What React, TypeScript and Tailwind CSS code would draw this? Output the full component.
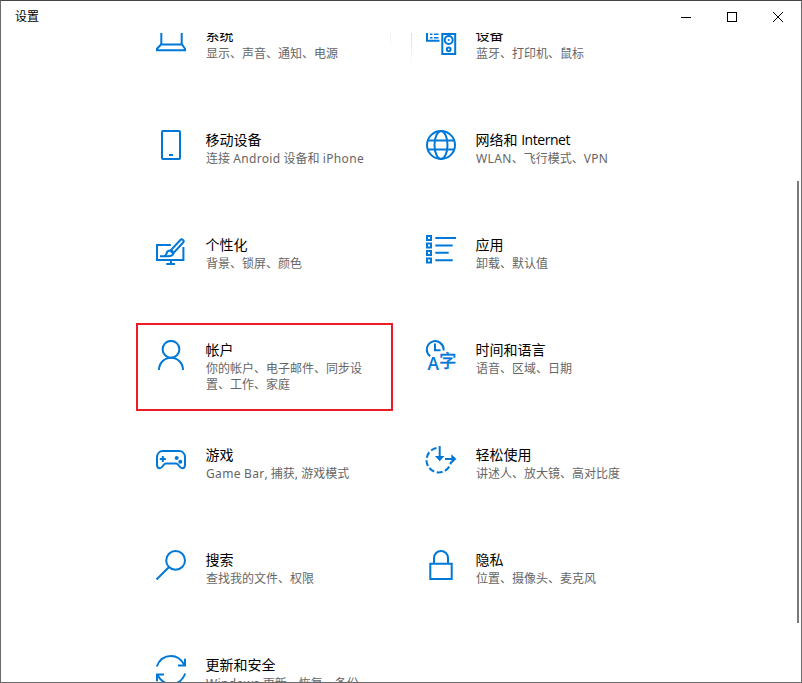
import type { ReactNode } from "react";

type SettingsCategory = {
  id: string;
  title: string;
  description: string;
  icon: ReactNode;
  highlighted?: boolean;
};

const CATEGORIES: SettingsCategory[] = [
  {
    id: "system",
    title: "系统",
    description: "显示、声音、通知、电源",
    icon: (
      <>
        <path d="M6.3 19V3h20.4v16" />
        <path d="M6 19.5h21l3 4.2v1.5H2v-1.5z" />
      </>
    ),
  },
  {
    id: "devices",
    title: "设备",
    description: "蓝牙、打印机、鼠标",
    icon: (
      <>
        <path d="M14.5 15.7H2V4h12.5" />
        <path d="M5 9.3h2.5M9 9.3h4.5M5 12.7h2.5M9 12.7h4.5" strokeWidth="1.6" />
        <path d="M17.3 9h12.9v20H17.3z" />
        <circle cx="23.7" cy="15" r="4" />
        <circle cx="23.7" cy="15" r="1" fill="currentColor" stroke="none" />
        <circle cx="23.7" cy="24.3" r="1.9" />
      </>
    ),
  },
  {
    id: "phone",
    title: "移动设备",
    description: "连接 Android 设备和 iPhone",
    icon: (
      <>
        <rect x="7" y="1" width="18" height="28" rx="1" />
        <path d="M14 25h4" />
      </>
    ),
  },
  {
    id: "network",
    title: "网络和 Internet",
    description: "WLAN、飞行模式、VPN",
    icon: (
      <>
        <circle cx="16" cy="15" r="14" />
        <ellipse cx="16" cy="15" rx="6.5" ry="14" />
        <path d="M3 10.5h26M3 19.5h26" />
      </>
    ),
  },
  {
    id: "personalization",
    title: "个性化",
    description: "背景、锁屏、颜色",
    icon: (
      <>
        <path d="M15.8 10H2v15h26.4V12" />
        <path d="M16 25v4M11.3 29H20" />
        <path d="M15.4 15.6 25.4 5a1.8 1.8 0 0 1 2.7 2.5L18.2 18.4" />
        <path d="M5 21.3h7.5c3.4 0 5.7-1.2 5.7-3.2 0-1.5-1.2-2.5-2.8-2.5-2.6 0-3.6 1.3-4 3.2-.2 1.2-1 2-2.6 2.4M14.5 15l4.5 4" />
      </>
    ),
  },
  {
    id: "apps",
    title: "应用",
    description: "卸载、默认值",
    icon: (
      <>
        <path d="M2 1h4v4H2zM2 8.5h4v4H2zM2 16h4v4H2zM2 23.5h4v4H2z" />
        <path d="M10.3 3H31M10.3 10.4h17.4M10.3 17.7h13.4M10.3 25.2h17.4" />
      </>
    ),
  },
  {
    id: "accounts",
    title: "帐户",
    description: "你的帐户、电子邮件、同步设置、工作、家庭",
    highlighted: true,
    icon: (
      <>
        <circle cx="16" cy="9.3" r="8.4" />
        <path d="M4 30a12 12.3 0 0 1 24 0" />
      </>
    ),
  },
  {
    id: "time",
    title: "时间和语言",
    description: "语音、区域、日期",
    icon: (
      <>
        <path d="M5.2 16.3A8.4 8.4 0 1 1 18.6 10.5" />
        <path d="M10 3.5v6.7h5.5" />
        <text
          x="2.5"
          y="30"
          fontSize="17.5"
          fontWeight="600"
          fill="currentColor"
          stroke="none"
          textLength="11.5"
          lengthAdjust="spacingAndGlyphs"
          className="font-['Open_Sans',sans-serif]"
        >
          A
        </text>
        <text
          x="14.3"
          y="26.5"
          fontSize="17"
          fill="currentColor"
          stroke="currentColor"
          strokeWidth="0.5"
          className="font-['Noto_Sans_CJK_SC',sans-serif]"
        >
          字
        </text>
      </>
    ),
  },
  {
    id: "gaming",
    title: "游戏",
    description: "Game Bar, 捕获, 游戏模式",
    icon: (
      <>
        <path d="M8 6h16c3.6 0 6 2.8 6 6.5v7.2c0 2.2-1.3 3.5-2.8 3.5-3.2 0-3.2-4.7-6-4.7H10.8c-2.8 0-2.8 4.7-6 4.7C3.3 23.2 2 21.9 2 19.7v-7.2C2 8.8 4.4 6 8 6z" />
        <path d="M7.8 11v6M4.8 14h6" />
        <circle cx="21.7" cy="13" r="2" fill="currentColor" stroke="none" />
        <circle cx="25.3" cy="16.8" r="2" fill="currentColor" stroke="none" />
      </>
    ),
  },
  {
    id: "accessibility",
    title: "轻松使用",
    description: "讲述人、放大镜、高对比度",
    icon: (
      <>
        <path d="M11.5 3A12.3 12.3 0 1 0 26 16.5" strokeDasharray="6 2.5" />
        <path d="M14.7 1v13M12.2 12h5l-2.5 2.7z" />
        <path d="M20 14h10M27.3 11.5v5l2.7-2.5z" />
      </>
    ),
  },
  {
    id: "search",
    title: "搜索",
    description: "查找我的文件、权限",
    icon: (
      <>
        <circle cx="20.6" cy="10.4" r="9.4" />
        <path d="M13.8 17.2 1.5 29.5" />
      </>
    ),
  },
  {
    id: "privacy",
    title: "隐私",
    description: "位置、摄像头、麦克风",
    icon: (
      <>
        <path d="M5.3 13.7h21.4V29H5.3z" />
        <path d="M9 13.5V8a7 7 0 0 1 14 0v5.5" />
      </>
    ),
  },
  {
    id: "update",
    title: "更新和安全",
    description: "Windows 更新、恢复、备份",
    icon: (
      <>
        <path d="M1.8 11.5C4 5.5 9 1 16 1c5.500 0 10.500 3.500 13.500 9" />
        <path d="M30 3.8V10.5H23" />
        <path d="M30.2 18.5C28 24.5 23 29 16 29c-5.500 0-10.500-3.500-13.500-9" />
        <path d="M2 26.2V19.5h7" />
      </>
    ),
  },
];

// Latin words get their own tracking so they sit evenly beside the Chinese glyphs
function MixedText({ text, latinClass }: { text: string; latinClass: string }) {
  return text.split(/([A-Za-z]+)/).map((part, index) =>
    index % 2 === 1 ? (
      <span key={index} className={latinClass}>
        {part}
      </span>
    ) : (
      part
    ),
  );
}

function TitleBar() {
  return (
    <header className="flex h-8 shrink-0 items-center justify-between pl-3.5">
      <h1 className="text-xs">设置</h1>

      <div className="flex h-full">
        <button aria-label="最小化" className="flex w-[46px] items-center justify-center">
          <svg width="10" height="10" stroke="black" shapeRendering="crispEdges">
            <path d="M0 5.5h10" />
          </svg>
        </button>
        <button aria-label="最大化" className="flex w-[46px] items-center justify-center">
          <svg width="10" height="10" fill="none" stroke="black" shapeRendering="crispEdges">
            <path d="M.5.5h9v9h-9z" />
          </svg>
        </button>
        <button aria-label="关闭" className="flex w-[46px] items-center justify-center">
          <svg width="10" height="10" stroke="black">
            <path d="m0 0 10 10M10 0 0 10" />
          </svg>
        </button>
      </div>
    </header>
  );
}

function CategoryTile({ category }: { category: SettingsCategory }) {
  return (
    <a
      className={`flex gap-[18px] border-2 pt-[15px] pl-[17px] ${
        category.highlighted ? "border-[#ed1c24]" : "border-transparent"
      }`}
    >
      <svg
        viewBox="0 0 32 32"
        fill="none"
        stroke="currentColor"
        strokeWidth="2"
        className="size-8 shrink-0 text-[#0078d7]"
      >
        {category.icon}
      </svg>

      <div className="w-[162px] pl-px">
        <h2 className="-ml-[0.5px] text-sm leading-5 text-black">
          <MixedText text={category.title} latinClass="tracking-[-0.45px]" />
        </h2>
        <p className="pt-px font-['Noto_Sans','Noto_Sans_CJK_SC',sans-serif] text-xs leading-4 text-[#666]">
          <MixedText text={category.description} latinClass="tracking-[0.35px]" />
        </p>
      </div>
    </a>
  );
}

export default function App() {
  return (
    <div className="flex h-[683px] w-[802px] flex-col overflow-hidden border border-[#6b6b6b] border-t-[#444] bg-white font-['Open_Sans','Noto_Sans_CJK_SC',sans-serif] text-black">
      <TitleBar />

      <main className="relative flex min-h-0 flex-1 justify-between overflow-hidden">
        <div className="-mt-[25px] ml-[135px] grid auto-rows-[88px] grid-cols-[257px_257px] gap-x-[13px] gap-y-[17px]">
          {CATEGORIES.map((category) => (
            <CategoryTile key={category.id} category={category} />
          ))}
        </div>

        <div className="mt-[148px] mr-0.5 h-[442px] w-0.5 bg-[#7a7a7a]" />

        {/* Fading reveal edges between the first two tiles */}
        <div className="absolute top-0 left-[389px] h-4 w-px bg-linear-to-b from-[#eee] to-white" />
        <div className="absolute top-0 left-[410px] h-8 w-px bg-linear-to-b from-[#ddd] to-white" />
      </main>
    </div>
  );
}
